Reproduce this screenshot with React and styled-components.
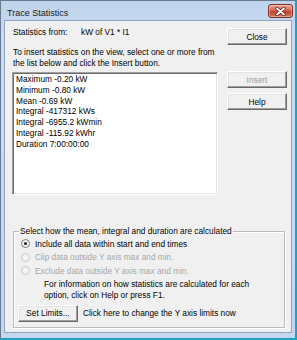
import React from 'react';
import styled, { createGlobalStyle } from 'styled-components';

const GlobalStyle = createGlobalStyle`
  html, body {
    margin: 0;
    padding: 0;
    background: #1fa3c4;
  }
  * {
    box-sizing: border-box;
  }
`;

const UI_FONT = '"Liberation Sans", Arial, sans-serif';

const Window = styled.div`
  width: 297px;
  height: 340px;
  display: flex;
  flex-direction: column;
  background: linear-gradient(#bfd3ec, #cbdcf0 40px, #c4d7ee);
  border-top: 1px solid #6b7b8f;
  border-left: 1px solid #6b7b8f;
  border-right: 2px solid #1fa3c4;
  border-bottom: 2px solid #1fa3c4;
  padding: 0 3px 5px 3px;
  font-family: ${UI_FONT};
  font-size: 8.3px;
  color: #000;
`;

const TitleBar = styled.div`
  height: 19px;
  display: flex;
  align-items: flex-start;
  justify-content: space-between;
`;

const Title = styled.div`
  font-size: 9px;
  line-height: 12px;
  padding: 6px 0 0 3px;
  color: #1b1b1b;
`;

const CloseX = styled.div`
  width: 25px;
  height: 14px;
  margin-top: 3px;
  margin-right: -1px;
  border: 1px solid #7d3025;
  border-radius: 3px;
  background: linear-gradient(#e7a597, #d26a55 45%, #c0442d 55%, #d5735c);
  box-shadow: inset 0 0 0 1px rgba(255, 255, 255, 0.35);
  display: flex;
  align-items: center;
  justify-content: center;
`;

const Client = styled.div`
  flex: 1;
  background: #f0f0f0;
  border: 1px solid #8fa4bf;
  padding: 5px 4px 4px 7px;
  display: flex;
  flex-direction: column;
`;

const TopRow = styled.div`
  display: flex;
  gap: 9px;
`;

const LeftCol = styled.div`
  width: 206px;
  display: flex;
  flex-direction: column;
`;

const RightCol = styled.div`
  width: 60px;
  display: flex;
  flex-direction: column;
`;

const StatsLine = styled.div`
  display: flex;
  line-height: 12px;
  height: 12px;
  padding-left: 1px;
`;

const StatsLabel = styled.span`
  width: 68px;
`;

const Instructions = styled.div`
  margin-top: 9px;
  line-height: 10.5px;
  padding-left: 1px;
  white-space: nowrap;
`;

const ListBox = styled.div`
  margin-top: 4px;
  height: 123px;
  background: #fff;
  border: 1px solid;
  border-color: #a0a0a0 #fff #fff #a0a0a0;
  box-shadow: inset 1px 1px 0 #6d6d6d, inset -1px -1px 0 #e3e3e3;
  padding: 1px 3px;
`;

const ListItem = styled.div`
  line-height: 10.8px;
  white-space: nowrap;
`;

const Button = styled.div`
  width: 60px;
  height: 17px;
  flex-shrink: 0;
  margin-top: ${(p) => p.$top || 0}px;
  background: #f0f0f0;
  border: 1px solid;
  border-color: #fff #696969 #696969 #fff;
  box-shadow: inset -1px -1px 0 #a0a0a0, inset 1px 1px 0 #e3e3e3;
  display: flex;
  align-items: center;
  justify-content: center;
  color: ${(p) => (p.$disabled ? '#a0a0a0' : '#000')};
`;

const GroupBox = styled.fieldset`
  margin: 31px 0 0 1px;
  width: 272px;
  padding: 0 4px 5px 4px;
  border: 1px solid #bcbcbc;
  box-shadow: inset 1px 1px 0 #fff, 1px 1px 0 #fff;
`;

const Legend = styled.legend`
  padding: 0 1px;
  margin-left: 1px;
  line-height: 11px;
`;

const RadioRow = styled.div`
  display: flex;
  align-items: center;
  height: 13.5px;
  padding-left: 3px;
  color: ${(p) => (p.$disabled ? '#a7a7a7' : '#000')};
`;

const RadioCircle = styled.span`
  width: 9px;
  height: 9px;
  border-radius: 50%;
  border: 1px solid ${(p) => (p.$disabled ? '#c6c6c6' : '#7c7c7c')};
  background: ${(p) => (p.$disabled ? '#f4f4f4' : 'radial-gradient(#fff, #e2e2e2)')};
  display: flex;
  align-items: center;
  justify-content: center;
  margin-right: 5px;
  flex-shrink: 0;

  &::after {
    content: '';
    width: 3px;
    height: 3px;
    border-radius: 50%;
    background: ${(p) => (p.$checked ? '#1a1a1a' : 'transparent')};
  }
`;

const InfoText = styled.div`
  padding-left: 26px;
  margin-top: 1px;
  line-height: 11px;
  white-space: nowrap;
`;

const LimitsRow = styled.div`
  display: flex;
  align-items: center;
  gap: 5px;
  margin-top: 4px;
`;

const listItems = [
  'Maximum -0.20 kW',
  'Minimum -0.80 kW',
  'Mean -0.69 kW',
  'Integral -417312 kWs',
  'Integral -6955.2 kWmin',
  'Integral -115.92 kWhr',
  'Duration 7:00:00:00',
];

const radios = [
  { label: 'Include all data within start and end times', checked: true },
  { label: 'Clip data outside Y axis max and min.', disabled: true },
  { label: 'Exclude data outside Y axis max and min.', disabled: true },
];

export default function App() {
  return (
    <>
      <GlobalStyle />
      <Window>
        <TitleBar>
          <Title>Trace Statistics</Title>
          <CloseX>
            <svg width="11" height="9" viewBox="0 0 11 9">
              <path d="M2 1.5 L9 7.5 M9 1.5 L2 7.5" stroke="#5a2018" strokeWidth="3.2" strokeLinecap="round" />
              <path d="M2 1.5 L9 7.5 M9 1.5 L2 7.5" stroke="#fff" strokeWidth="1.8" strokeLinecap="round" />
            </svg>
          </CloseX>
        </TitleBar>
        <Client>
          <TopRow>
            <LeftCol>
              <StatsLine>
                <StatsLabel>Statistics from:</StatsLabel>
                <span>kW of V1 * I1</span>
              </StatsLine>
              <Instructions>
                To insert statistics on the view, select one or more from
                <br />
                the list below and click the Insert button.
              </Instructions>
              <ListBox>
                {listItems.map((item) => (
                  <ListItem key={item}>{item}</ListItem>
                ))}
              </ListBox>
            </LeftCol>
            <RightCol>
              <Button $top={2}>Close</Button>
              <Button $top={26} $disabled>Insert</Button>
              <Button $top={5}>Help</Button>
            </RightCol>
          </TopRow>
          <GroupBox>
            <Legend>Select how the mean, integral and duration are calculated</Legend>
            {radios.map((r) => (
              <RadioRow key={r.label} $disabled={r.disabled}>
                <RadioCircle $checked={r.checked} $disabled={r.disabled} />
                {r.label}
              </RadioRow>
            ))}
            <InfoText>
              For information on how statistics are calculated for each
              <br />
              option, click on Help or press F1.
            </InfoText>
            <LimitsRow>
              <Button>Set Limits...</Button>
              <span>Click here to change the Y axis limits now</span>
            </LimitsRow>
          </GroupBox>
        </Client>
      </Window>
    </>
  );
}
